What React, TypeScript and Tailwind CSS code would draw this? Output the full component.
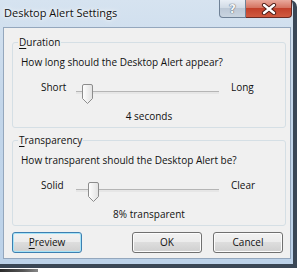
import React from 'react';

const font = "font-['Open_Sans',sans-serif]";

const Thumb = ({ className }: { className: string }) => (
  <svg className={`absolute top-[-8px] ${className}`} width="11" height="20" viewBox="0 0 11 20">
    <defs>
      <linearGradient id="thumbFill" x1="0" y1="0" x2="1" y2="0">
        <stop offset="0" stopColor="#ffffff" />
        <stop offset="1" stopColor="#e1e1e1" />
      </linearGradient>
    </defs>
    <path d="M2 0.5 H9 Q10.5 0.5 10.5 2 V14.5 L5.5 19.5 L0.5 14.5 V2 Q0.5 0.5 2 0.5 Z" fill="url(#thumbFill)" stroke="#8c8c8c" />
  </svg>
);

const Slider = ({ low, high, thumb }: { low: string; high: string; thumb: string }) => (
  <div className="flex items-start h-[22px] pl-[28px]">
    <span className="w-[35px] leading-[14px]">{low}</span>
    <div className="relative w-[143px] mt-[11px] h-[3px] border-t border-[#b5b5b5] bg-[#e6e6e6]">
      <Thumb className={thumb} />
    </div>
    <span className="ml-[12px] leading-[14px]">{high}</span>
  </div>
);

const Group = ({
  label,
  rest,
  question,
  low,
  high,
  thumb,
  value,
}: {
  label: string;
  rest: string;
  question: string;
  low: string;
  high: string;
  thumb: string;
  value: string;
}) => (
  <fieldset className="w-[274px] border border-[#d5dfe5] rounded-[3px] px-0 pb-[4px]">
    <legend className="ml-[5px] px-[1px] leading-[14px]">
      <span className="underline underline-offset-2">{label}</span>
      {rest}
    </legend>
    <div className="mt-[6px] pl-[8px] leading-[14px]">{question}</div>
    <div className="mt-[11px]">
      <Slider low={low} high={high} thumb={thumb} />
    </div>
    <div className="mt-[7px] leading-[14px] text-center">{value}</div>
  </fieldset>
);

const btn =
  'h-[21px] w-[70px] rounded-[3px] border leading-[17px] text-center bg-[linear-gradient(#f2f2f2,#ebebeb_50%,#dddddd_50%,#cfcfcf)]';

export default function App() {
  return (
    <div className={`w-[304px] h-[276px] bg-white text-[10px] text-[#111] ${font}`}>
      <div className="w-[297px] h-[268px] flex flex-col bg-[linear-gradient(180deg,#d6e3f0,#c3d6ea_40%,#bcd2e9)] border-r-4 border-b-4 border-[#3a4756] rounded-tr-[7px]">
        <div className="h-[27px] flex items-start">
          <div className="flex-1 pl-[4px] pt-[5px] text-[11px] leading-[16px] [text-shadow:0_0_6px_#fff,0_0_3px_#fff]">
            Desktop Alert Settings
          </div>
          <div className="w-[27px] h-[18px] border border-[#6f8196] border-t-0 rounded-bl-[4px] bg-[linear-gradient(#e8eef5,#cfd9e4_50%,#bcc8d6_50%,#c9d4e0)] flex items-center justify-center">
            <span className="font-['DejaVu_Sans',sans-serif] font-bold text-[12px] leading-[12px] text-[#f4f6f9] [text-shadow:0_0_1px_#4b5664,0_0_1px_#4b5664]">
              ?
            </span>
          </div>
          <div className="w-[46px] h-[18px] mr-[1px] border border-[#6b2a22] border-t-0 border-l-0 rounded-br-[4px] bg-[linear-gradient(#e9a99c,#d57462_45%,#c2402a_50%,#d05a40)] flex items-center justify-center">
            <svg width="16" height="12" viewBox="0 0 16 12">
              <path d="M3 2 L13 10 M13 2 L3 10" stroke="#4a1a14" strokeWidth="4.2" strokeLinecap="round" />
              <path d="M3 2 L13 10 M13 2 L3 10" stroke="#ffffff" strokeWidth="2.4" strokeLinecap="round" />
            </svg>
          </div>
        </div>
        <div className="ml-[3px] w-[288px] h-[232px] bg-[#f0f0f0] border border-[#94a7bd] pt-[7px] pl-[8px]">
          <Group
            label="D"
            rest="uration"
            question="How long should the Desktop Alert appear?"
            low="Short"
            high="Long"
            thumb="left-[6px]"
            value="4 seconds"
          />
          <div className="mt-[5px]">
            <Group
              label="T"
              rest="ransparency"
              question="How transparent should the Desktop Alert be?"
              low="Solid"
              high="Clear"
              thumb="left-[12px]"
              value="8% transparent"
            />
          </div>
          <div className="mt-[6px] flex">
            <button className={`${btn} border-[#3c7fb1] shadow-[inset_0_0_0_1px_#a6e3f7]`}>
              <span className="underline underline-offset-2">P</span>review
            </button>
            <button className={`${btn} ml-[50px] border-[#707070] shadow-[inset_0_0_0_1px_#fcfcfc]`}>OK</button>
            <button className={`${btn} ml-[11px] border-[#707070] shadow-[inset_0_0_0_1px_#fcfcfc]`}>Cancel</button>
          </div>
        </div>
      </div>
      <div className="mt-[1px] w-[38px] h-[3px] bg-[linear-gradient(90deg,#2b2b2b,#555_60%,#888)]" />
    </div>
  );
}
